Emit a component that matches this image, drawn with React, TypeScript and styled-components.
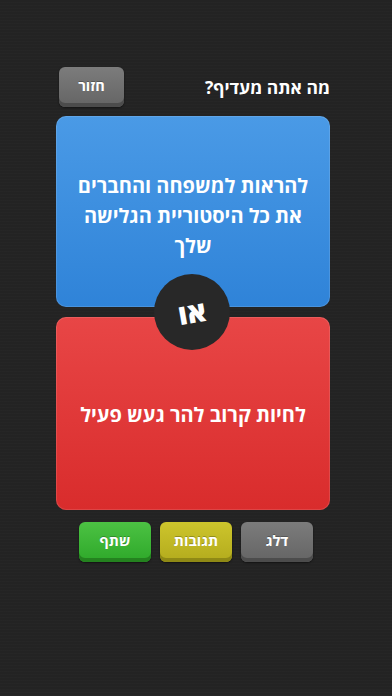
import React from 'react';
import styled, { createGlobalStyle } from 'styled-components';

const GlobalStyle = createGlobalStyle`
    html, body {
        margin: 0;
        padding: 0;
        background: #232323;
    }
    body {
        font-family: "Open Sans", "Liberation Sans", "DejaVu Sans", sans-serif;
    }
`;

const Screen = styled.div`
    width: 392px;
    height: 696px;
    box-sizing: border-box;
    padding: 67px 62px 0 56px;
    background-color: #232323;
    background-image: repeating-linear-gradient(
        0deg,
        rgba(255, 255, 255, 0.012) 0px,
        rgba(255, 255, 255, 0.012) 1px,
        transparent 1px,
        transparent 3px
    );
    direction: rtl;
    display: flex;
    flex-direction: column;
    align-items: stretch;
`;

const Header = styled.div`
    display: flex;
    justify-content: space-between;
    align-items: center;
    padding-left: 3px;
    height: 39px;
    margin-bottom: 10px;
`;

const Title = styled.h1`
    margin: 0;
    font-size: 17.5px;
    font-weight: 700;
    color: #ffffff;
`;

const Button = styled.button<{ $tone: 'gray' | 'green' | 'yellow'; $width?: number }>`
    width: ${p => p.$width ?? 72}px;
    height: 40px;
    border: none;
    border-radius: 6px;
    font-family: inherit;
    font-size: 14.5px;
    font-weight: 700;
    color: #ffffff;
    cursor: pointer;
    padding: 0 0 3px;
    background: ${p =>
        p.$tone === 'green'
            ? 'linear-gradient(#4cc243, #2ea82a)'
            : p.$tone === 'yellow'
            ? 'linear-gradient(#cdc52c, #b3ab1d)'
            : 'linear-gradient(#7c7c7c, #646464)'};
    box-shadow: inset 0 -4px 0 ${p =>
        p.$tone === 'green' ? '#24821f' : p.$tone === 'yellow' ? '#8f8915' : '#4c4c4c'},
        0 1px 2px rgba(0, 0, 0, 0.5);
    text-shadow: 0 -1px 0 rgba(0, 0, 0, 0.25);
`;

const Choices = styled.div`
    position: relative;
    display: flex;
    flex-direction: column;
    gap: 10px;
`;

const Card = styled.div<{ $color: 'blue' | 'red' }>`
    height: ${p => (p.$color === 'blue' ? '191px' : '193px')};
    box-sizing: border-box;
    border-radius: 10px;
    display: flex;
    align-items: center;
    justify-content: center;
    padding: ${p => (p.$color === 'blue' ? '8px 14px 0' : '2px 14px 0')};
    text-align: center;
    font-size: 20px;
    font-weight: 700;
    line-height: 30px;
    color: #ffffff;
    background: ${p =>
        p.$color === 'blue'
            ? 'linear-gradient(#4a9ae6, #2f83d8)'
            : 'linear-gradient(#e84646, #d92c2c)'};
    box-shadow: inset 0 0 0 1px rgba(255, 255, 255, 0.12);
`;

const Or = styled.div`
    position: absolute;
    left: 50%;
    top: 158px;
    width: 76px;
    height: 76px;
    margin-left: -39px;
    border-radius: 50%;
    background: #282828;
    display: flex;
    align-items: center;
    justify-content: center;
    font-size: 28px;
    font-weight: 800;
    color: #ffffff;
`;

const OrText = styled.span`
    display: inline-block;
    transform: rotate(-10deg);
`;

const Actions = styled.div`
    display: flex;
    justify-content: center;
    gap: 9px;
    margin-top: 12px;
    margin-left: 6px;
`;

export default function App() {
    return (
        <>
            <GlobalStyle />
            <Screen>
                <Header>
                    <Title>מה אתה מעדיף?</Title>
                    <Button $tone="gray" $width={65}>חזור</Button>
                </Header>
                <Choices>
                    <Card $color="blue">
                        להראות למשפחה והחברים
                        <br />
                        את כל היסטוריית הגלישה
                        <br />
                        שלך
                    </Card>
                    <Card $color="red">לחיות קרוב להר געש פעיל</Card>
                    <Or>
                        <OrText>או</OrText>
                    </Or>
                </Choices>
                <Actions>
                    <Button $tone="gray">דלג</Button>
                    <Button $tone="yellow">תגובות</Button>
                    <Button $tone="green">שתף</Button>
                </Actions>
            </Screen>
        </>
    );
}
